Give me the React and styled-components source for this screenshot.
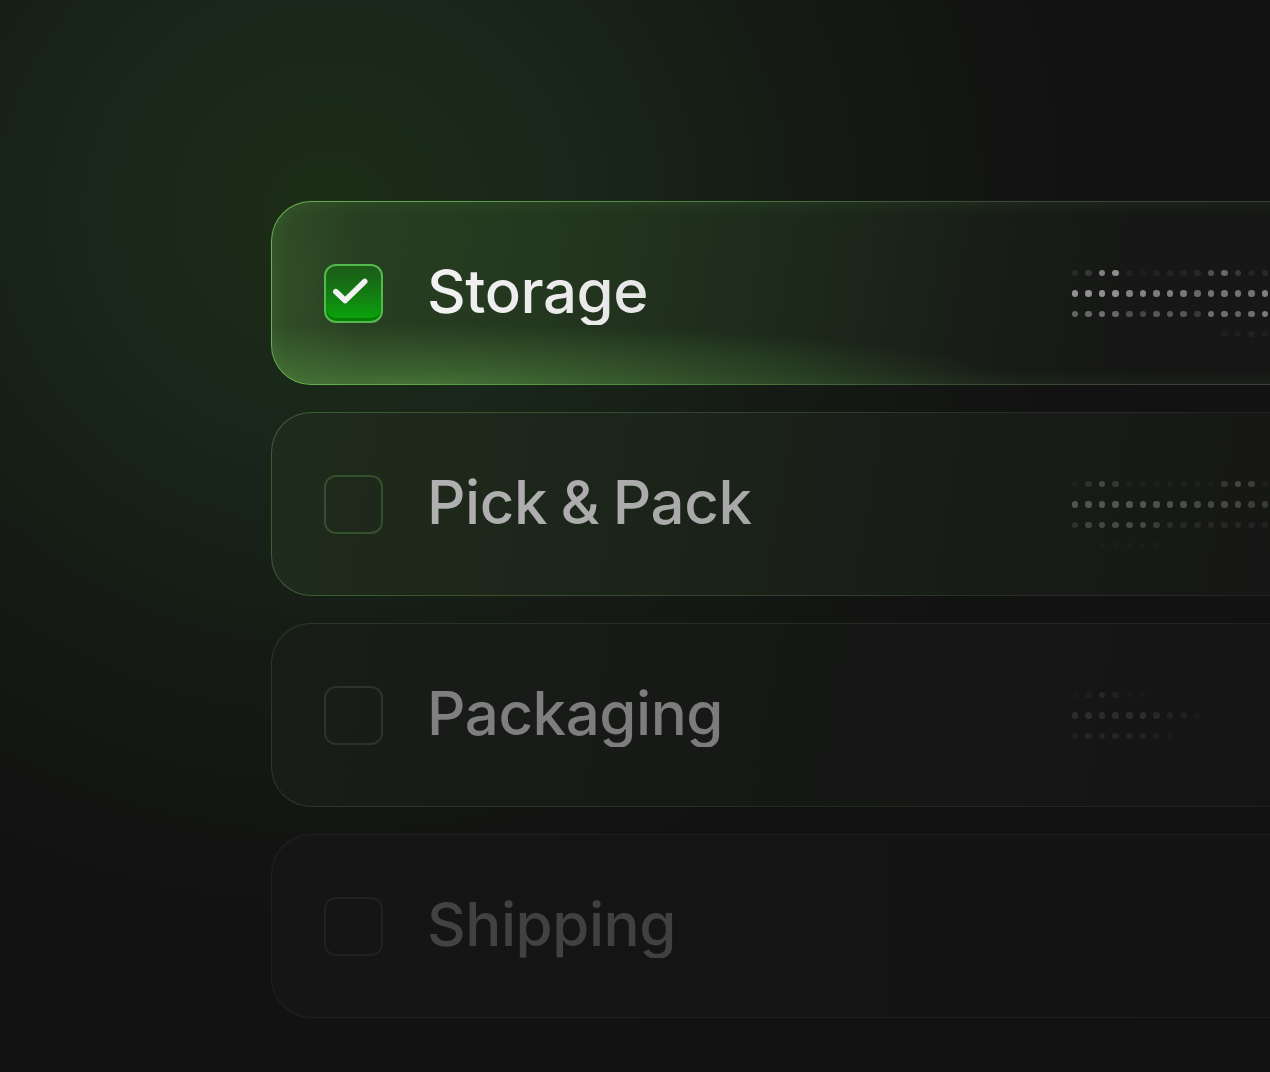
import styled, { createGlobalStyle } from "styled-components";

const GlobalStyle = createGlobalStyle`
  html, body {
    margin: 0;
    padding: 0;
    background: #121212;
  }
  body {
    font-family: Inter, "Noto Sans", sans-serif;
    overflow: hidden;
  }
`;

const Page = styled.main`
  width: 1270px;
  height: 1072px;
  overflow: hidden;
  box-sizing: border-box;
  padding: 201px 0 0 271px;
  background:
    radial-gradient(ellipse 820px 780px at 330px 210px, #1c2d16 0%, #19261a 30%, #151b14 58%, rgba(18, 18, 18, 0) 90%),
    #121212;
  display: flex;
  flex-direction: column;
  gap: 27px;
`;

const tones = {
  active: {
    fill: `
      radial-gradient(ellipse 600px 60px at 150px 100%, rgba(105, 175, 80, 0.42), rgba(105, 175, 80, 0) 100%) padding-box,
      radial-gradient(ellipse 90px 200px at 0px 50%, rgba(90, 150, 70, 0.18), rgba(90, 150, 70, 0) 100%) padding-box,
      linear-gradient(100deg, #2a4222 0%, #24381f 22%, #1d2a1b 45%, #181d17 62%, #161716 75%, #161616 100%) padding-box,
      linear-gradient(90deg, #66b34f 0%, #4f8f3f 30%, #3b4d36 60%, #383838 100%) border-box`,
    text: "linear-gradient(90deg, #f2f2f2, #d0d0d0)",
    box: "#3a5a32",
  },
  second: {
    fill: `
      linear-gradient(100deg, #1f2b1c 0%, #1c251a 30%, #181c17 60%, #151515 100%) padding-box,
      linear-gradient(90deg, #3d5e33 0%, #33482d 35%, #262a25 70%, #202020 100%) border-box`,
    text: "linear-gradient(90deg, #b0b0b0, #a0a0a0)",
    box: "#33502c",
  },
  third: {
    fill: `
      linear-gradient(100deg, #191d18 0%, #161816 45%, #131313 100%) padding-box,
      linear-gradient(90deg, #2b3a28 0%, #252e22 40%, #1d1e1d 100%) border-box`,
    text: "linear-gradient(90deg, #808080, #767676)",
    box: "#2a3428",
  },
  fourth: {
    fill: `
      linear-gradient(90deg, #141514 0%, #131313 100%) padding-box,
      linear-gradient(90deg, #1f221f 0%, #1b1b1b 100%) border-box`,
    text: "linear-gradient(90deg, #424242, #3b3b3b)",
    box: "#202220",
  },
};

const Card = styled.div`
  flex: 0 0 auto;
  width: 1150px;
  height: 184px;
  box-sizing: border-box;
  border: 1.5px solid transparent;
  border-radius: 40px;
  background: ${(p) => tones[p.$tone].fill};
  box-shadow: ${(p) =>
    p.$tone === "active" ? "inset 0 0 18px rgba(110, 190, 90, 0.14)" : "none"};
  display: flex;
  align-items: center;
  padding: 0 80px 0 52px;
`;

const Box = styled.div`
  flex: 0 0 auto;
  width: 59px;
  height: 59px;
  box-sizing: border-box;
  border-radius: 12px;
  border: 2.5px solid ${(p) => tones[p.$tone].box};
  display: flex;
  align-items: center;
  justify-content: center;
`;

const CheckedBox = styled(Box)`
  border-color: #55b84c;
  background: linear-gradient(180deg, #1d5a19 0%, #127f12 55%, #0aa70a 100%);
  box-shadow: inset 0 -3px 0 rgba(10, 120, 10, 0.9);
`;

const Label = styled.span`
  flex: 1 1 auto;
  margin-left: 44px;
  font-size: 60px;
  font-weight: 500;
  letter-spacing: -0.45px;
  word-spacing: -2px;
  background: ${(p) => tones[p.$tone].text};
  -webkit-background-clip: text;
  background-clip: text;
  color: transparent;
  line-height: 1;
  padding-bottom: 4px;
`;

const Dots = styled.div`
  flex: 0 0 auto;
  display: grid;
  grid-template-columns: repeat(20, 13.6px);
  grid-auto-rows: 20.3px;
  align-items: center;
  justify-items: center;
  margin-top: 1px;
`;

const Dot = styled.span`
  width: 6.5px;
  height: 6.5px;
  border-radius: 50%;
  background: #fff;
`;

const dotRows = {
  active: [
    [0, 0, 0, 0, 0, 0, 0, 0, 0, 0, 0, 0, 0, 0, 0, 0, 0, 0, 0, 0],
    [.08, .14, .45, .5, .05, .03, .05, .06, .06, .07, .25, .35, .14, .06, .08, .15, .25, .08, .05, .08],
    [.52, .52, .52, .52, .46, .46, .44, .44, .42, .35, .4, .4, .4, .4, .45, .45, .4, .4, .45, .45],
    [.34, .34, .38, .34, .24, .2, .28, .28, .28, .15, .38, .38, .34, .38, .44, .36, .32, .36, .4, .36],
    [0, 0, 0, 0, 0, 0, 0, 0, 0, 0, 0, .04, .04, .05, .04, 0, 0, 0, 0, 0],
  ],
  second: [
    [0, 0, 0, 0, 0, 0, 0, 0, 0, 0, 0, 0, 0, 0, 0, 0, 0, 0, 0, 0],
    [.03, .1, .2, .13, .03, .03, .03, .03, .03, .03, .03, .13, .2, .16, .03, .08, .12, .04, .03, .04],
    [.26, .26, .26, .26, .26, .26, .24, .24, .23, .2, .2, .2, .2, .16, .16, .18, .18, .16, .16, .16],
    [.1, .18, .2, .2, .2, .2, .15, .09, .07, .07, .07, .07, .07, .06, .05, .05, .05, .05, .05, .05],
    [0, 0, .02, .02, .02, .02, .02, 0, 0, 0, 0, 0, 0, 0, 0, 0, 0, 0, 0, 0],
  ],
  third: [
    [0, 0, 0, 0, 0, 0, 0, 0, 0, 0, 0, 0, 0, 0, 0, 0, 0, 0, 0, 0],
    [.02, .04, .08, .05, .02, .02, 0, 0, 0, 0, 0, 0, 0, 0, 0, 0, 0, 0, 0, 0],
    [.1, .1, .1, .1, .1, .1, .08, .06, .045, .025, .01, 0, 0, 0, 0, 0, 0, 0, 0, 0],
    [.04, .065, .065, .065, .065, .065, .04, .02, 0, 0, 0, 0, 0, 0, 0, 0, 0, 0, 0, 0],
    [0, 0, 0, 0, 0, 0, 0, 0, 0, 0, 0, 0, 0, 0, 0, 0, 0, 0, 0, 0],
  ],
};

const items = [
  { label: "Storage", tone: "active", checked: true },
  { label: "Pick & Pack", tone: "second" },
  { label: "Packaging", tone: "third" },
  { label: "Shipping", tone: "fourth" },
];

const Check = () => (
  <svg width="59" height="59" viewBox="0 0 59 59" fill="none">
    <path
      d="M13 30 L23 39.5 L44 19"
      stroke="#f2f2f2"
      strokeWidth="6"
      strokeLinecap="round"
      strokeLinejoin="round"
      transform="translate(-2.5 -2.5)"
    />
  </svg>
);

const Row = ({ label, tone, checked }) => {
  const rows = dotRows[tone];
  return (
    <Card $tone={tone}>
      {checked ? (
        <CheckedBox $tone={tone}>
          <Check />
        </CheckedBox>
      ) : (
        <Box $tone={tone} />
      )}
      <Label $tone={tone}>{label}</Label>
      {rows && (
        <Dots>
          {rows.flatMap((row, r) =>
            row.map((o, c) => <Dot key={`${r}-${c}`} style={{ opacity: o }} />)
          )}
        </Dots>
      )}
    </Card>
  );
};

export default function App() {
  return (
    <>
      <GlobalStyle />
      <Page>
        {items.map((it) => (
          <Row key={it.label} {...it} />
        ))}
      </Page>
    </>
  );
}
